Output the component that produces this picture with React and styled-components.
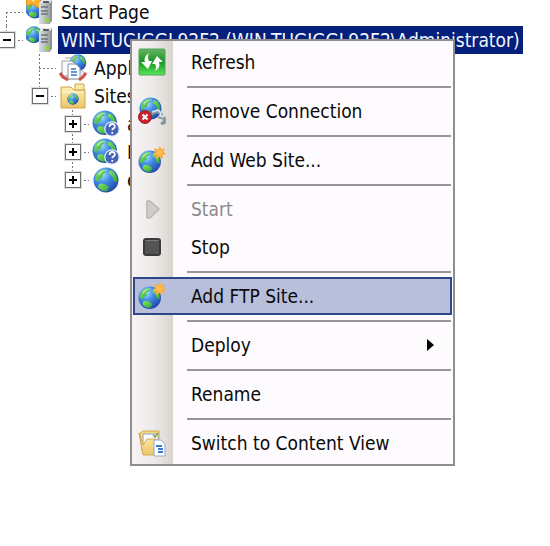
import React from 'react';
import styled, { createGlobalStyle, css } from 'styled-components';

const GlobalStyle = createGlobalStyle`
  * { box-sizing: border-box; }
  body {
    margin: 0;
    background: #fff;
    color: #0a0a0a;
    font-family: Tahoma, "DejaVu Sans Condensed", "Noto Sans", sans-serif;
    font-size: 19px;
    line-height: 28px;
  }
`;

const Page = styled.main`
  position: relative;
  min-height: 100vh;
  overflow: hidden;
`;

const Tree = styled.ul`
  list-style: none;
  margin: -2px 0 0 -10px;
  padding: 0;
`;

const TreeRow = styled.li`
  display: flex;
  align-items: center;
  height: 28px;
`;

const dotsDown = 'repeating-linear-gradient(180deg, #777 0 2px, transparent 2px 4px)';
const dotsAcross = 'repeating-linear-gradient(90deg, #777 0 2px, transparent 2px 4px)';
const spans = {
  full: ['1px 100%', '16px 0'],
  top: ['1px 50%', '16px 0'],
  bottom: ['1px 50%', '16px 100%'],
};

const Guide = styled.span`
  display: flex;
  flex: none;
  align-items: center;
  justify-content: center;
  width: 33px;
  height: 100%;
  ${({ $line }) =>
    $line &&
    css`
      background-image: ${dotsDown}, ${dotsAcross};
      background-size: ${spans[$line][0]}, 17px 1px;
      background-position: ${spans[$line][1]}, 16px 50%;
      background-repeat: no-repeat;
    `}
`;

const Expander = styled.button`
  width: 16px;
  height: 16px;
  padding: 0;
  display: grid;
  place-items: center;
  border: 1px solid #707070;
  background: #fff;
  color: #000;
  box-shadow: 0 0 0 1px #dcdcdc;
  svg { display: block; }
`;

const IconSlot = styled.span`
  display: flex;
  flex: none;
  width: 33px;
  justify-content: center;
  svg { display: block; }
`;

const Label = styled.span`
  margin-left: 2px;
  padding: 0 3px;
  white-space: nowrap;
  ${({ $selected }) => $selected && css`
    background: #04207a;
    color: #f4f6ff;
  `}
`;

const Menu = styled.div`
  position: absolute;
  left: 130px;
  top: 39px;
  width: 325px;
  padding: 2px 1px;
  border: 2px solid #8e8e90;
  background: linear-gradient(90deg, #f7f3f4 0, #efebeb 20px, #d9d5cd 41px, #fdfbfd 41px);
`;

const MenuItem = styled.button`
  display: flex;
  align-items: center;
  width: 100%;
  height: 38px;
  padding: 0 16px 0 0;
  border: 2px solid ${({ $active }) => ($active ? '#2f4688' : 'transparent')};
  background: ${({ $active }) => ($active ? '#b7bfdb' : 'transparent')};
  color: inherit;
  font: inherit;
  text-align: left;
  &:disabled { color: #8c8a8c; }
`;

const MenuIcon = styled.span`
  display: flex;
  flex: none;
  justify-content: center;
  width: 34px;
  margin-right: 22px;
  svg { display: block; }
`;

const MenuText = styled.span`
  flex: 1;
  white-space: nowrap;
`;

const Separator = styled.hr`
  height: 2px;
  margin: 5px 1px 4px 54px;
  border: 0;
  background: #979597;
`;

function Gradients() {
  return (
    <svg width="0" height="0" aria-hidden="true" display="block">
      <defs>
        <radialGradient id="sea" cx="35%" cy="28%" r="75%">
          <stop offset="0" stopColor="#a8defc" />
          <stop offset=".45" stopColor="#3f8ce6" />
          <stop offset="1" stopColor="#2448ac" />
        </radialGradient>
        <linearGradient id="land" x1="0" y1="0" x2="1" y2="1">
          <stop offset="0" stopColor="#8ae468" />
          <stop offset="1" stopColor="#2ca838" />
        </linearGradient>
        <linearGradient id="steel" x1="0" x2="1" y1="0" y2="0">
          <stop offset="0" stopColor="#dcdee0" />
          <stop offset=".4" stopColor="#c4c8cb" />
          <stop offset="1" stopColor="#989ea4" />
        </linearGradient>
        <linearGradient id="manila" x1="0" y1="0" x2="0" y2="1">
          <stop offset="0" stopColor="#fdeeb0" />
          <stop offset="1" stopColor="#ebc668" />
        </linearGradient>
        <linearGradient id="leaf" x1="0" y1="0" x2="0" y2="1">
          <stop offset="0" stopColor="#66b466" />
          <stop offset=".5" stopColor="#169420" />
          <stop offset="1" stopColor="#5be85a" />
        </linearGradient>
      </defs>
    </svg>
  );
}

const Globe = ({ x = 0, y = 0, s = 1 }) => (
  <g transform={`translate(${x} ${y}) scale(${s})`}>
    <circle cx="13" cy="13" r="12.5" fill="url(#sea)" />
    <path d="M3 8Q6 3 11 2l2 3-3 2-1 4-3 1-1 3-3-2z" fill="url(#land)" />
    <path d="M17 3l4 2 3 5v5l-3-1-2-5-3-2z" fill="url(#land)" />
    <path d="M6 17q5-2 10 3l-2 4q-6 1-9-4z" fill="url(#land)" />
    <path d="M5 7Q9 2 15 3Q9 4 6 9z" fill="#fff" opacity=".5" />
  </g>
);

const Svg = ({ size = 28, children }) => (
  <svg width={size} height={size} viewBox={`0 0 ${size} ${size}`} aria-hidden="true">{children}</svg>
);

const Tower = () => (
  <g>
    <path d="M13 5l3-3h10v21l-3 3H13z" fill="#8b9197" />
    <path d="M13 5h11v21H13z" fill="url(#steel)" />
    <path d="M13 5l3-3h10l-2 3z" fill="#e6e8ea" />
    <path d="M17 4h6" stroke="#353b42" strokeWidth="1.6" />
    <path d="M15 9h7M15 13h7M15 16h7" stroke="#6d737a" strokeWidth="1.3" />
    <circle cx="21" cy="22" r="2.2" fill="#8fdc2c" />
  </g>
);

const ServerIcon = () => (
  <Svg><Globe x={-1} y={0} s={0.68} /><Tower /></Svg>
);

const StartIcon = () => (
  <Svg>
    <Globe x={-1} y={1} s={0.76} />
    <path d="M0 0h13l5 7-5 3-7-4-5 2z" fill="#f8b030" stroke="#e08a1c" />
    <path d="M3 0h8l-4 4z" fill="#ffe27a" />
    <Tower />
  </Svg>
);

const PoolsIcon = () => (
  <Svg>
    <Globe x={10} y={0} s={0.68} />
    <ellipse cx="14" cy="20" rx="12" ry="5" fill="#e8eef5" stroke="#a4b1c3" />
    <path d="M3 7h10l3 3v12H3z" fill="#fafafa" stroke="#9a9da6" />
    <path d="M6 4h10l3 3" fill="none" stroke="#a4a7ae" />
    <path d="M9 10h8l4 4v11H9z" fill="#fff" stroke="#868f9f" />
    <path d="M12 15h5M12 18h6M12 21h6" stroke="#3972c4" strokeWidth="1.6" />
    <path d="M1 19l3 4 5 3M27 19l-3 4-4 3" fill="none" stroke="#d35046" strokeWidth="3" />
  </Svg>
);

const FolderIcon = () => (
  <Svg>
    <path d="M2 5h10l3 3h11v18H2z" fill="url(#manila)" stroke="#cfa24a" />
    <path d="M16 2h9v6h-9z" fill="#fce9a9" stroke="#cfa24a" />
    <path d="M3 10h22" stroke="#fff3c6" strokeWidth="1.5" />
    <Globe x={8} y={11} s={0.46} />
  </Svg>
);

const SiteIcon = () => <Svg><Globe x={1} y={1} /></Svg>;

const UnknownSiteIcon = () => (
  <Svg>
    <Globe x={0} y={0} s={0.98} />
    <circle cx="20" cy="19" r="7.2" fill="#4163b8" stroke="#e6edff" strokeWidth="1.2" />
    <path d="M17.5 17q0-3 2.7-3t2.6 2.4q0 1.3-1.5 2.2-1 .7-1 1.7M20.3 22v1.8" fill="none" stroke="#fff" strokeWidth="1.8" />
  </Svg>
);

const RefreshIcon = () => (
  <Svg>
    <rect x="1" y="1" width="26" height="26" rx="1" fill="url(#leaf)" stroke="#4fa458" />
    <path d="M11 5Q5 9 7 14H3l7 7 4-8h-3Q9 9 11 5z" fill="#fff" />
    <path d="M17 23q6-3 4-9h4l-6-6-5 8h3q2 3 0 7z" fill="#fff" />
  </Svg>
);

const DisconnectIcon = () => (
  <Svg>
    <Globe x={1} y={0} s={0.88} />
    <path d="M14 16l6-2 3 3-1 3 4 1 1 4-4 2" fill="none" stroke="#8799a6" strokeWidth="3.5" />
    <path d="M14 15l6-2 3 3-1 3 4 1" fill="none" stroke="#d8e5ec" strokeWidth="1.6" />
    <circle cx="7" cy="20" r="6.5" fill="#cc202b" stroke="#9c2430" />
    <path d="M4.5 17.5l5 5m0-5l-5 5" stroke="#fff" strokeWidth="2.2" />
  </Svg>
);

const NewSiteIcon = () => (
  <Svg>
    <Globe x={0} y={4} s={0.9} />
    <path d="M22 0l1.5 3.5L27 2l-1.5 3.5L28 8l-3.5 1 .5 4-3.5-2-3 2.5-.5-4-3.5-1L17 6l-1-4 4 1.5z" fill="#fbae3d" />
    <circle cx="21.5" cy="6.5" r="2.6" fill="#ffc253" />
  </Svg>
);

const PlayIcon = () => (
  <Svg><path d="M9 6v17h3l9-9-9-8z" fill="#cfcccc" stroke="#b8b5b5" strokeWidth="1.5" strokeLinejoin="round" /></Svg>
);

const StopIcon = () => (
  <Svg>
    <rect x="6" y="6" width="16" height="16" rx="2" fill="#545454" stroke="#3a3a3a" strokeWidth="2" />
    <path d="M7.5 7.5h13" stroke="#777" />
  </Svg>
);

const ContentIcon = () => (
  <Svg>
    <path d="M2 4l3-2h16v20H4z" fill="#f2d785" stroke="#d5ad51" />
    <path d="M5 5h15v10H5z" fill="#fafcff" stroke="#91a6bb" />
    <path d="M15 6l2 2 3-4" fill="none" stroke="#78aa4b" strokeWidth="1.5" />
    <path d="M1 4l4 12 4-6h9l-2 16H5z" fill="url(#manila)" stroke="#d3a94e" />
    <path d="M16 11h7l4 4v12H16z" fill="#fff" stroke="#91aad0" />
    <path d="M18 17h6M20 20h5M20 23h5" stroke="#3e7bd9" strokeWidth="1.8" />
  </Svg>
);

const SubmenuArrow = () => (
  <svg width="7" height="12" viewBox="0 0 7 12" aria-hidden="true"><path d="M0 0v12l7-6z" fill="#000" /></svg>
);

const rows = [
  { guides: ['bottom'], icon: StartIcon, label: 'Start Page' },
  { guides: ['top'], open: true, icon: ServerIcon, label: 'WIN-TUGIGGL92F2 (WIN-TUGIGGL92F2\\Administrator)', selected: true },
  { guides: [null, 'full'], icon: PoolsIcon, label: 'Application Pools' },
  { guides: [null, 'top'], open: true, icon: FolderIcon, label: 'Sites' },
  { guides: [null, null, 'full'], open: false, icon: UnknownSiteIcon, label: 'a' },
  { guides: [null, null, 'full'], open: false, icon: UnknownSiteIcon, label: 'D' },
  { guides: [null, null, 'top'], open: false, icon: SiteIcon, label: 'e' },
];

const groups = [
  [{ label: 'Refresh', icon: RefreshIcon }],
  [{ label: 'Remove Connection', icon: DisconnectIcon }],
  [{ label: 'Add Web Site...', icon: NewSiteIcon }],
  [{ label: 'Start', icon: PlayIcon, disabled: true }, { label: 'Stop', icon: StopIcon }],
  [{ label: 'Add FTP Site...', icon: NewSiteIcon, active: true }],
  [{ label: 'Deploy', submenu: true }],
  [{ label: 'Rename' }],
  [{ label: 'Switch to Content View', icon: ContentIcon }],
];

export default function App() {
  return (
    <Page>
      <GlobalStyle />
      <Tree>
        {rows.map(({ guides, open, icon: Icon, label, selected }) => (
          <TreeRow key={label}>
            {guides.map((line, i) => (
              <Guide key={i} $line={line}>
                {open !== undefined && i === guides.length - 1 && (
                  <Expander aria-label={`${open ? 'Collapse' : 'Expand'} ${label}`} aria-expanded={open}>
                    <svg width="10" height="10" viewBox="0 0 10 10" aria-hidden="true">
                      <path d={open ? 'M1 5h8' : 'M1 5h8M5 1v8'} stroke="#000" strokeWidth="2" />
                    </svg>
                  </Expander>
                )}
              </Guide>
            ))}
            <IconSlot><Icon /></IconSlot>
            <Label $selected={selected}>{label}</Label>
          </TreeRow>
        ))}
      </Tree>
      <Menu role="menu" aria-label="Connection actions">
        {groups.map((items, g) => (
          <React.Fragment key={g}>
            {g > 0 && <Separator />}
            {items.map(({ label, icon: Icon, disabled, active, submenu }) => (
              <MenuItem key={label} role="menuitem" disabled={disabled} $active={active} aria-haspopup={submenu ? 'menu' : undefined}>
                <MenuIcon>{Icon && <Icon />}</MenuIcon>
                <MenuText>{label}</MenuText>
                {submenu && <SubmenuArrow />}
              </MenuItem>
            ))}
          </React.Fragment>
        ))}
      </Menu>
      <Gradients />
    </Page>
  );
}
